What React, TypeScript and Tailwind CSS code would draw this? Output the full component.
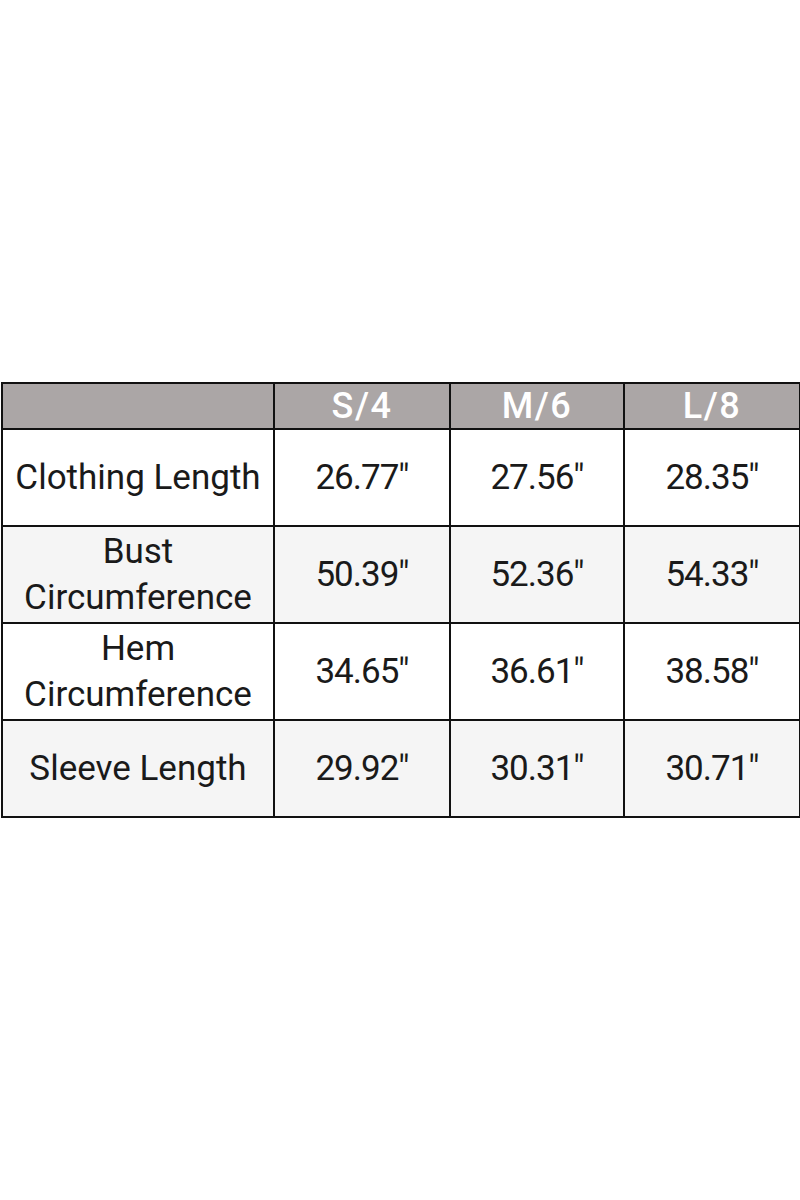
import React from 'react'

const sizes = ['S/4', 'M/6', 'L/8']

const rows: { label: string[]; values: string[] }[] = [
  { label: ['Clothing Length'], values: ['26.77"', '27.56"', '28.35"'] },
  { label: ['Bust', 'Circumference'], values: ['50.39"', '52.36"', '54.33"'] },
  { label: ['Hem', 'Circumference'], values: ['34.65"', '36.61"', '38.58"'] },
  { label: ['Sleeve Length'], values: ['29.92"', '30.31"', '30.71"'] },
]

export default function App() {
  return (
    <div className="flex h-[1200px] w-[800px] items-center bg-white px-px font-['Roboto',sans-serif]">
      <table className="w-[798px] table-fixed border-collapse border-2 border-[#111]">
        <colgroup>
          <col className="w-[272px]" />
          <col className="w-[176px]" />
          <col className="w-[174px]" />
          <col className="w-[176px]" />
        </colgroup>
        <thead>
          <tr className="h-[46px] bg-[#aba6a6]">
            <th className="border-2 border-[#111]" />
            {sizes.map(s => (
              <th
                key={s}
                className="border-2 border-[#111] text-center text-[36px] font-medium leading-none tracking-[1.5px] text-white"
              >
                {s}
              </th>
            ))}
          </tr>
        </thead>
        <tbody>
          {rows.map((r, i) => (
            <tr key={i} className={i % 2 === 1 ? 'h-[97px] bg-[#f5f5f5]' : 'h-[97px] bg-white'}>
              <td className="border-2 border-[#111] text-center text-[35px] font-normal leading-[46px] text-[#1a1a1a]">
                {r.label.map(l => (
                  <div key={l}>{l}</div>
                ))}
              </td>
              {r.values.map(v => (
                <td
                  key={v}
                  className="border-2 border-[#111] text-center text-[35px] font-normal leading-none tracking-[-1px] text-[#1a1a1a]"
                >
                  {v}
                </td>
              ))}
            </tr>
          ))}
        </tbody>
      </table>
    </div>
  )
}
